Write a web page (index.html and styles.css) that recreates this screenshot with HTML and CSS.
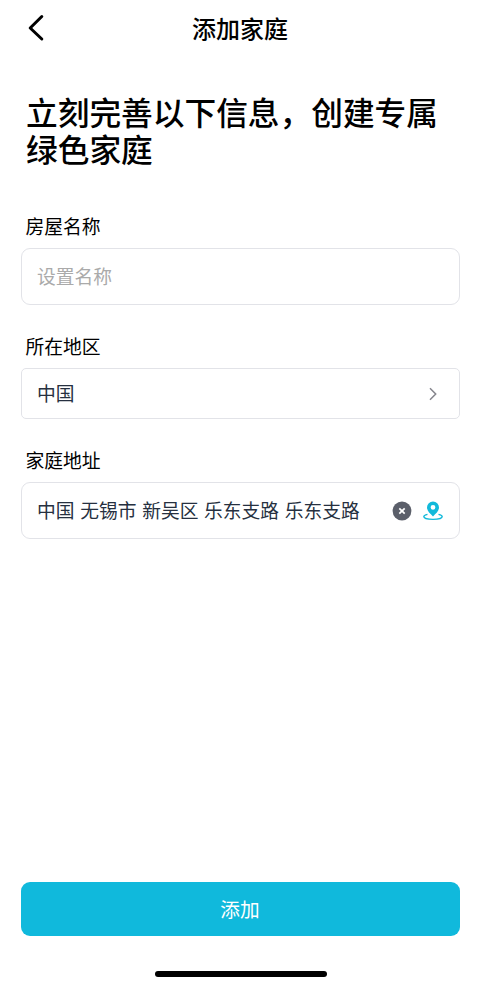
FILE: index.html
```html
<!DOCTYPE html>
<html lang="zh-CN">
<head>
<meta charset="utf-8">
<meta name="viewport" content="width=device-width, initial-scale=1">
<title>添加家庭</title>
<link rel="stylesheet" href="styles.css">
</head>
<body>
<div class="screen">
  <header class="nav">
    <button class="back" aria-label="返回"><svg width="18" height="28" viewBox="0 0 18 28" fill="none" stroke="#000" stroke-width="3" stroke-linecap="round" stroke-linejoin="round"><path d="M14.800 2.500 3.200 14l11.600 11"/></svg></button>
    <h1 class="title">添加家庭</h1>
  </header>
  <main class="form">
    <h2 class="headline">立刻完善以下信息，创建专属<br>绿色家庭</h2>
    <section class="group">
      <div class="label">房屋名称</div>
      <div class="field"><span class="hint">设置名称</span></div>
    </section>
    <section class="group">
      <div class="label">所在地区</div>
      <div class="field field-short"><span class="value">中国</span><svg class="chevron" width="10" height="14" viewBox="0 0 10 14" fill="none" stroke="#85858c" stroke-width="1.500"><path d="m2 1.300 5.700 5.700L2 12.700"/></svg></div>
    </section>
    <section class="group">
      <div class="label">家庭地址</div>
      <div class="field"><span class="value">中国 无锡市 新吴区 乐东支路 乐东支路</span>
        <svg class="clear" width="20" height="20" viewBox="0 0 20 20"><circle cx="10" cy="10" r="9.400" fill="#5b5f6a"/><path d="m7.300 7.300 5.400 5.400m0-5.400-5.400 5.400" stroke="#fff" stroke-width="1.700"/></svg>
        <svg class="pin" width="20" height="20" viewBox="0 0 20 20"><path fill="#12b9da" fill-rule="evenodd" d="M10 .4a6 6 0 0 0-6 6c0 3.700 3 6 6 9 3-3 6-5.300 6-9a6 6 0 0 0-6-6Zm0 3.500a2.400 2.400 0 1 1 0 4.800 2.400 2.400 0 0 1 0-4.800Z"/><path d="M4.500 13.400C2.200 13.900.8 14.700.8 15.600c0 1.600 4.100 2.800 9.200 2.800s9.200-1.200 9.200-2.800c0-.9-1.400-1.700-3.700-2.200" fill="none" stroke="#12b9da" stroke-width="1.400"/></svg>
      </div>
    </section>
  </main>
  <footer class="footer">
    <button class="submit">添加</button>
    <div class="home"></div>
  </footer>
</div>
</body>
</html>
```
FILE: styles.css
```css
* { box-sizing: border-box; }
body { margin: 0; background: #fff; color: #000; font-family: "Noto Sans CJK SC", sans-serif; }
button { border: 0; padding: 0; font: inherit; background: none; }
h1, h2 { margin: 0; }
svg { display: block; flex: none; }
.screen { height: 986px; display: flex; flex-direction: column; }
.nav { height: 56px; display: grid; grid-template-columns: 60px 1fr 60px; align-items: center; }
.back { margin-left: 27px; }
.title { font-size: 24px; line-height: 36px; font-weight: 500; text-align: center; }
.form { flex: 1; padding: 37px 20px 0 21px; }
.headline { margin: 0 5px 45px; font-size: 31.700px; line-height: 37px; font-weight: 500; white-space: nowrap; }
.group { margin-bottom: 27px; }
.label { height: 28px; margin: 0 4.500px 8px; font-size: 18.800px; line-height: 28px; }
.field { height: 57px; display: flex; align-items: center; padding: 0 16px 0 15px; border: 1px solid #e2e3e8; border-radius: 9px; font-size: 18.750px; line-height: 28px; white-space: nowrap; word-spacing: 1.500px; }
.field-short { height: 51px; border-radius: 5px; }
.hint, .value { padding-bottom: 2px; }
.hint { color: #aaa; }
.value { color: #263040; }
.chevron { margin-left: auto; margin-right: 5px; }
.clear { margin-left: auto; }
.pin { margin-left: 11px; }
.footer { padding: 0 20px 9px 21px; }
.submit { display: block; width: 100%; height: 54px; padding-right: 1px; border-radius: 9px; background: #10b9dc; color: #fff; font-size: 19.700px; line-height: 54px; }
.home { width: 172px; height: 6px; margin: 35px auto 0; border-radius: 3px; background: #000; }
```
